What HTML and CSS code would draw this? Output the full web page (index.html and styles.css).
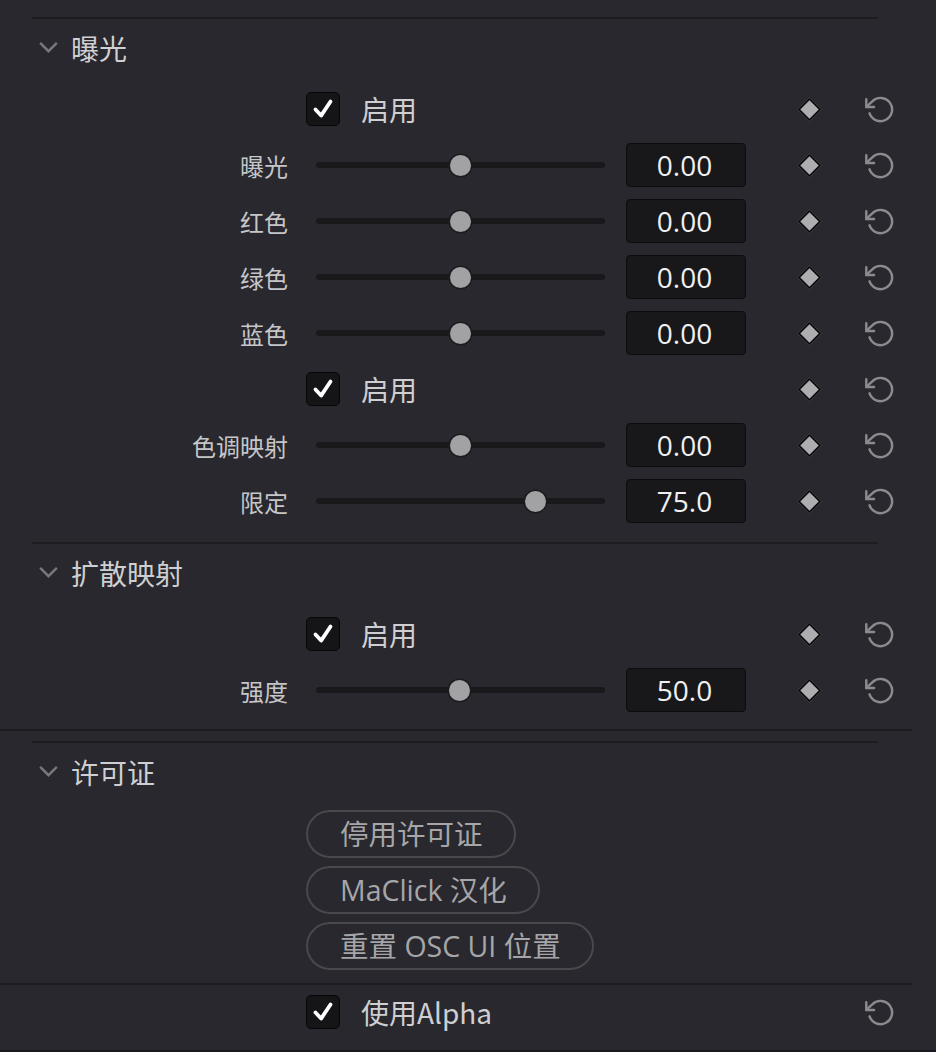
FILE: index.html
```html
<!DOCTYPE html>
<html lang="zh">
<head>
<meta charset="utf-8">
<link rel="stylesheet" href="styles.css">
</head>
<body>
<div class="panel">
  <div class="sep"></div>
  <div class="section">
    <div class="header"><svg class="chev" viewBox="0 0 22 14"><path d="M2 2 L11 11 L20 2"/></svg><span>曝光</span></div>
    <div class="rows">
      <div class="row">
        <div class="label"></div>
        <div class="check-cell"><span class="check"><svg viewBox="0 0 34 34"><path d="M9 17.5 L15 24 L25 9"/></svg></span><span class="check-text">启用</span></div>
        <div class="key"><span class="diamond"></span></div>
        <div class="reset"><svg viewBox="0 0 24 24"><polyline points="1 4 1 10 7 10"/><path d="M3.51 15a9 9 0 1 0 2.13-9.36L1 10"/></svg></div>
      </div>
      <div class="row">
        <div class="label">曝光</div>
        <div class="slider"><div class="track"><span class="knob" style="left:50%"></span></div></div>
        <div class="value">0.00</div>
        <div class="key"><span class="diamond"></span></div>
        <div class="reset"><svg viewBox="0 0 24 24"><polyline points="1 4 1 10 7 10"/><path d="M3.51 15a9 9 0 1 0 2.13-9.36L1 10"/></svg></div>
      </div>
      <div class="row">
        <div class="label">红色</div>
        <div class="slider"><div class="track"><span class="knob" style="left:50%"></span></div></div>
        <div class="value">0.00</div>
        <div class="key"><span class="diamond"></span></div>
        <div class="reset"><svg viewBox="0 0 24 24"><polyline points="1 4 1 10 7 10"/><path d="M3.51 15a9 9 0 1 0 2.13-9.36L1 10"/></svg></div>
      </div>
      <div class="row">
        <div class="label">绿色</div>
        <div class="slider"><div class="track"><span class="knob" style="left:50%"></span></div></div>
        <div class="value">0.00</div>
        <div class="key"><span class="diamond"></span></div>
        <div class="reset"><svg viewBox="0 0 24 24"><polyline points="1 4 1 10 7 10"/><path d="M3.51 15a9 9 0 1 0 2.13-9.36L1 10"/></svg></div>
      </div>
      <div class="row">
        <div class="label">蓝色</div>
        <div class="slider"><div class="track"><span class="knob" style="left:50%"></span></div></div>
        <div class="value">0.00</div>
        <div class="key"><span class="diamond"></span></div>
        <div class="reset"><svg viewBox="0 0 24 24"><polyline points="1 4 1 10 7 10"/><path d="M3.51 15a9 9 0 1 0 2.13-9.36L1 10"/></svg></div>
      </div>
      <div class="row">
        <div class="label"></div>
        <div class="check-cell"><span class="check"><svg viewBox="0 0 34 34"><path d="M9 17.5 L15 24 L25 9"/></svg></span><span class="check-text">启用</span></div>
        <div class="key"><span class="diamond"></span></div>
        <div class="reset"><svg viewBox="0 0 24 24"><polyline points="1 4 1 10 7 10"/><path d="M3.51 15a9 9 0 1 0 2.13-9.36L1 10"/></svg></div>
      </div>
      <div class="row">
        <div class="label">色调映射</div>
        <div class="slider"><div class="track"><span class="knob" style="left:50%"></span></div></div>
        <div class="value">0.00</div>
        <div class="key"><span class="diamond"></span></div>
        <div class="reset"><svg viewBox="0 0 24 24"><polyline points="1 4 1 10 7 10"/><path d="M3.51 15a9 9 0 1 0 2.13-9.36L1 10"/></svg></div>
      </div>
      <div class="row">
        <div class="label">限定</div>
        <div class="slider"><div class="track"><span class="knob" style="left:76%"></span></div></div>
        <div class="value">75.0</div>
        <div class="key"><span class="diamond"></span></div>
        <div class="reset"><svg viewBox="0 0 24 24"><polyline points="1 4 1 10 7 10"/><path d="M3.51 15a9 9 0 1 0 2.13-9.36L1 10"/></svg></div>
      </div>
    </div>
  </div>
  <div class="sep sep-mid"></div>
  <div class="section">
    <div class="header"><svg class="chev" viewBox="0 0 22 14"><path d="M2 2 L11 11 L20 2"/></svg><span>扩散映射</span></div>
    <div class="rows">
      <div class="row">
        <div class="label"></div>
        <div class="check-cell"><span class="check"><svg viewBox="0 0 34 34"><path d="M9 17.5 L15 24 L25 9"/></svg></span><span class="check-text">启用</span></div>
        <div class="key"><span class="diamond"></span></div>
        <div class="reset"><svg viewBox="0 0 24 24"><polyline points="1 4 1 10 7 10"/><path d="M3.51 15a9 9 0 1 0 2.13-9.36L1 10"/></svg></div>
      </div>
      <div class="row">
        <div class="label">强度</div>
        <div class="slider"><div class="track"><span class="knob" style="left:49.5%"></span></div></div>
        <div class="value">50.0</div>
        <div class="key"><span class="diamond"></span></div>
        <div class="reset"><svg viewBox="0 0 24 24"><polyline points="1 4 1 10 7 10"/><path d="M3.51 15a9 9 0 1 0 2.13-9.36L1 10"/></svg></div>
      </div>
    </div>
  </div>
  <div class="sep-full sep-a"></div>
  <div class="sep sep-b"></div>
  <div class="section">
    <div class="header"><svg class="chev" viewBox="0 0 22 14"><path d="M2 2 L11 11 L20 2"/></svg><span>许可证</span></div>
    <div class="buttons">
      <button class="pill">停用许可证</button>
      <button class="pill">MaClick 汉化</button>
      <button class="pill">重置 OSC UI 位置</button>
    </div>
  </div>
  <div class="sep-full sep-c"></div>
  <div class="row alpha-row">
    <div class="label"></div>
    <div class="check-cell"><span class="check"><svg viewBox="0 0 34 34"><path d="M9 17.5 L15 24 L25 9"/></svg></span><span class="check-text">使用Alpha</span></div>
    <div class="key"></div>
    <div class="reset"><svg viewBox="0 0 24 24"><polyline points="1 4 1 10 7 10"/><path d="M3.51 15a9 9 0 1 0 2.13-9.36L1 10"/></svg></div>
  </div>
</div>
</body>
</html>
```

FILE: styles.css
```css
html, body {
  margin: 0;
  padding: 0;
  background: #28282e;
}
body {
  width: 936px;
  height: 1052px;
  overflow: hidden;
  font-family: "Open Sans", "Noto Sans CJK SC", sans-serif;
  color: #c9c9cc;
  border-bottom: 2px solid #1a1a1e;
  box-sizing: border-box;
}
.panel {
  width: 912px;
  padding-top: 17px;
}
.sep {
  margin-left: 32px;
  width: 846px;
  height: 2px;
  background: #1d1d21;
}
.sep-mid { margin-top: 13px; }
.sep-full {
  width: 912px;
  height: 2px;
  background: #1d1d21;
}
.sep-a { margin-top: 11px; }
.sep-b { margin-top: 10px; }
.sep-c { margin-top: 13px; }

.header {
  height: 60px;
  display: flex;
  align-items: center;
  padding-left: 38px;
  font-family: "Noto Sans CJK SC", sans-serif;
  font-size: 28px;
  color: #cfcfd2;
}
.chev {
  width: 21px;
  height: 13px;
  margin-right: 12px;
  margin-top: -4px;
}
.chev path {
  fill: none;
  stroke: #77777c;
  stroke-width: 2.6;
}
.header span { line-height: 1; margin-top: -2px; }

.rows {
  margin-top: 2px;
}
.row {
  display: grid;
  grid-template-columns: 306px 320px 120px 114px 40px;
  height: 56px;
  align-items: center;
}
.label {
  text-align: right;
  padding-right: 18px;
  font-family: "Noto Sans CJK SC", sans-serif;
  font-size: 24px;
  color: #c6c6c9;
}
.slider {
  padding-left: 10px;
}
.track {
  position: relative;
  width: 289px;
  height: 6px;
  border-radius: 3px;
  background: #19191c;
}
.knob {
  position: absolute;
  top: 50%;
  width: 21px;
  height: 21px;
  margin-left: -10.5px;
  margin-top: -10.5px;
  border-radius: 50%;
  background: #a2a2a5;
  box-shadow: 0 0 0 1.5px #1c1c1f;
}
.value {
  height: 42px;
  border: 1px solid #0c0c0e;
  border-radius: 4px;
  background: #18181b;
  color: #f0f0f0;
  font-size: 28px;
  line-height: 42px;
  text-align: center;
  padding-right: 3px;
}
.check-cell {
  grid-column: 2 / 4;
  display: flex;
  align-items: center;
}
.check {
  width: 32px;
  height: 32px;
  border: 1px solid #060607;
  border-radius: 5px;
  background: #151517;
  display: flex;
}
.check svg { width: 32px; height: 32px; }
.check path {
  fill: none;
  stroke: #ffffff;
  stroke-width: 4;
  stroke-linecap: round;
  stroke-linejoin: round;
}
.check-text {
  margin-left: 21px;
  font-family: "Noto Sans CJK SC", sans-serif;
  font-size: 28px;
  color: #cfcfd2;
}
.key {
  padding-left: 55px;
  display: flex;
  align-items: center;
}
.diamond {
  width: 13px;
  height: 13px;
  background: #aeaeb1;
  border: 2px solid #0e0e10;
  transform: rotate(45deg);
}
.reset {
  display: flex;
  justify-content: center;
  align-items: center;
}
.reset svg {
  width: 31px;
  height: 31px;
}
.reset polyline, .reset path {
  fill: none;
  stroke: #8b8b8f;
  stroke-width: 1.9;
  stroke-linecap: round;
  stroke-linejoin: round;
}

.buttons {
  margin-top: 7px;
  padding-left: 306px;
  display: flex;
  flex-direction: column;
  align-items: flex-start;
  gap: 8px;
}
.pill {
  height: 48px;
  padding: 0 31px 0 32px;
  border: 2px solid #48484d;
  border-radius: 24px;
  background: transparent;
  color: #a6a6a9;
  font-family: "Open Sans", "Noto Sans CJK SC", sans-serif;
  font-size: 28.5px;
  line-height: 1;
}
.alpha-row {
  height: 54px;
}
```
